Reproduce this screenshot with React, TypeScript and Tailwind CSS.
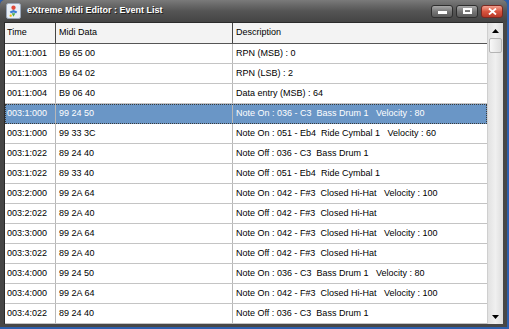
import React from "react";

const rows: Array<[string, string, string]> = [
    ['001:1:001', 'B9 65 00', 'RPN (MSB) : 0'],
    ['001:1:003', 'B9 64 02', 'RPN (LSB) : 2'],
    ['001:1:004', 'B9 06 40', 'Data entry (MSB) : 64'],
    ['003:1:000', '99 24 50', 'Note On : 036 - C3  Bass Drum 1   Velocity : 80'],
    ['003:1:000', '99 33 3C', 'Note On : 051 - Eb4  Ride Cymbal 1   Velocity : 60'],
    ['003:1:022', '89 24 40', 'Note Off : 036 - C3  Bass Drum 1'],
    ['003:1:022', '89 33 40', 'Note Off : 051 - Eb4  Ride Cymbal 1'],
    ['003:2:000', '99 2A 64', 'Note On : 042 - F#3  Closed Hi-Hat   Velocity : 100'],
    ['003:2:022', '89 2A 40', 'Note Off : 042 - F#3  Closed Hi-Hat'],
    ['003:3:000', '99 2A 64', 'Note On : 042 - F#3  Closed Hi-Hat   Velocity : 100'],
    ['003:3:022', '89 2A 40', 'Note Off : 042 - F#3  Closed Hi-Hat'],
    ['003:4:000', '99 24 50', 'Note On : 036 - C3  Bass Drum 1   Velocity : 80'],
    ['003:4:000', '99 2A 64', 'Note On : 042 - F#3  Closed Hi-Hat   Velocity : 100'],
    ['003:4:022', '89 24 40', 'Note Off : 036 - C3  Bass Drum 1'],
];

const selectedRow = 3;

function AppIcon() {
    return (
        <svg width="15" height="16" viewBox="0 0 16 17">
            <rect x="0.5" y="0.5" width="15" height="16" rx="2" fill="#e8eef6" stroke="#9aa8bc" />
            <circle cx="8" cy="5" r="2.3" fill="#e04a3a" />
            <path d="M4 9 L8 7.5 L12 9 L11 11 L8 10 L5 11 Z" fill="#3a7bd5" />
            <path d="M6 11 L8 14.5 L10 11 Z" fill="#4caf50" />
            <circle cx="5" cy="13.5" r="1.2" fill="#f5b700" />
        </svg>
    );
}

function TitleButton(props: { kind: 'min' | 'max' | 'close' }) {
    const base = "w-[22px] h-[13px] rounded-[3px] border flex items-center justify-center";
    if (props.kind == 'close')
        return (
            <div className={base + " border-[#7a2a22] bg-gradient-to-b from-[#f0a090] via-[#d9553f] to-[#b83a28]"}>
                <svg width="9" height="7" viewBox="0 0 9 7">
                    <path d="M1 0.5 L8 6.5 M8 0.5 L1 6.5" stroke="white" strokeWidth="1.8" />
                </svg>
            </div>
        );
    return (
        <div className={base + " border-[#2e2e2e] bg-gradient-to-b from-[#a8a8a8] via-[#777777] to-[#5a5a5a]"}>
            {props.kind == 'min'
                ? <div className="w-[9px] h-[3px] bg-white mt-[3px]"></div>
                : <div className="w-[9px] h-[6px] border-2 border-white"></div>}
        </div>
    );
}

export default function App() {
    return (
        <div className="w-[509px] h-[329px] bg-[#2d5fae] font-['Liberation_Sans',Arial,sans-serif] text-[9px]">
            <div className="w-[507px] h-[327px] bg-[#474747] rounded-t-[5px] flex flex-col">
                <div className="h-[22px] flex items-center pl-[6px] pr-[4px] rounded-t-[5px] bg-gradient-to-b from-[#7a7a7a] via-[#555555] to-[#444444]">
                    <AppIcon />
                    <div className="ml-[6px] text-white font-bold text-[9px] [text-shadow:1px_1px_0_#222]">eXtreme Midi Editor : Event List</div>
                    <div className="ml-auto flex gap-[3px]">
                        <TitleButton kind="min" />
                        <TitleButton kind="max" />
                        <TitleButton kind="close" />
                    </div>
                </div>
                <div className="flex-1 mx-[4px] mb-[3px] flex bg-white border-l border-t border-[#2a2a2a]">
                    <div className="flex-1 flex flex-col">
                        <div className="h-[21px] flex bg-[#f3f3f3] border-b border-[#555555] text-black">
                            <div className="w-[51px] border-r border-[#444444] pl-[2px] flex items-center">Time</div>
                            <div className="w-[177px] border-r border-[#444444] pl-[3px] flex items-center">Midi Data</div>
                            <div className="flex-1 pl-[3px] flex items-center">Description</div>
                        </div>
                        {rows.map((row, i) => {
                            const selected = i == selectedRow;
                            return (
                                <div key={i} className={"h-[20px] flex " + (selected ? "bg-[#6a96c6] text-white outline-1 outline-dotted outline-[#3a3a3a] -outline-offset-1" : "border-b border-[#c4c4c4] text-black")}>
                                    <div className="w-[51px] border-r border-[#b8b8b8] pl-[2px] flex items-center">{row[0]}</div>
                                    <div className="w-[177px] border-r border-[#b8b8b8] pl-[3px] flex items-center">{row[1]}</div>
                                    <div className="flex-1 pl-[3px] flex items-center whitespace-pre">{row[2]}</div>
                                </div>
                            );
                        })}
                    </div>
                    <div className="w-[16px] flex flex-col bg-gradient-to-r from-[#e2e2e2] via-[#f0f0f0] to-[#dcdcdc] border-l border-[#cfcfcf]">
                        <div className="h-[15px] flex items-center justify-center">
                            <svg width="7" height="4" viewBox="0 0 7 4"><path d="M3.5 0 L7 4 L0 4 Z" fill="black" /></svg>
                        </div>
                        <div className="h-[15px] mx-[1px] rounded-[2px] border border-[#b4b4b4] bg-gradient-to-r from-[#f8f8f8] to-[#dedede]"></div>
                        <div className="flex-1"></div>
                        <div className="h-[15px] flex items-center justify-center">
                            <svg width="7" height="4" viewBox="0 0 7 4"><path d="M0 0 L7 0 L3.5 4 Z" fill="black" /></svg>
                        </div>
                    </div>
                </div>
            </div>
        </div>
    );
}
